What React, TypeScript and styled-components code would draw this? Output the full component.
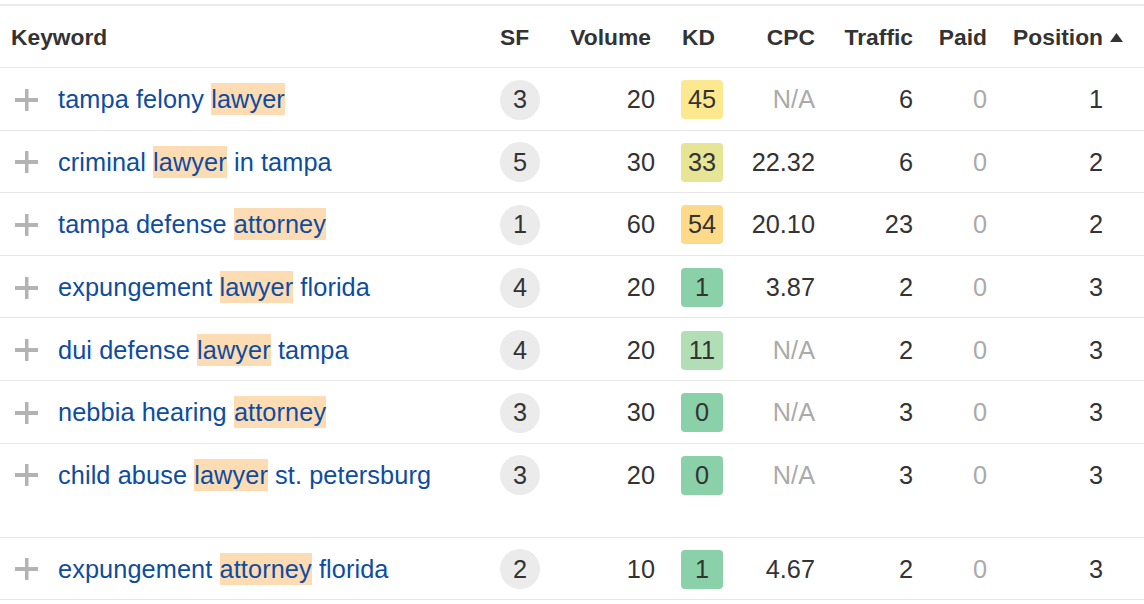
import React from "react";
import styled, { createGlobalStyle } from "styled-components";

const Global = createGlobalStyle`
  html, body { margin: 0; padding: 0; background: #ffffff; }
  body { padding-top: 4px; font-family: "Liberation Sans", Arial, Helvetica, sans-serif; color: #333333; }
`;

const COLS = "500px 60px 95px 85px 75px 98px 74px 1fr";

const Table = styled.div`
  width: 1144px;
  border-top: 2px solid #e9e9e9;
`;

const HeadRow = styled.div`
  display: grid;
  grid-template-columns: ${COLS};
  box-sizing: content-box;
  height: 60px;
  padding-top: 1px;
  align-items: center;
  border-bottom: 1px solid #e6e6e6;
`;

const HeadCell = styled.div<{ $align?: "left" | "right"; $pl?: number; $pr?: number }>`
  display: flex;
  align-items: center;
  justify-content: ${(p) => (p.$align === "right" ? "flex-end" : "flex-start")};
  padding-left: ${(p) => p.$pl ?? 0}px;
  padding-right: ${(p) => p.$pr ?? 0}px;
  font-size: 22.8px;
  font-weight: 700;
  color: #333333;
  white-space: nowrap;
  gap: 7px;
`;

const Row = styled.div<{ $tall?: boolean }>`
  display: grid;
  grid-template-columns: ${COLS};
  align-items: start;
  height: ${(p) => (p.$tall ? "93px" : "61.6px")};
  border-bottom: 1px solid #e6e6e6;
`;

const Cell = styled.div<{ $align?: "left" | "right"; $pl?: number; $pr?: number; $muted?: boolean }>`
  height: 61.6px;
  box-sizing: border-box;
  padding-top: 2px;
  display: flex;
  align-items: center;
  justify-content: ${(p) => (p.$align === "right" ? "flex-end" : "flex-start")};
  padding-left: ${(p) => p.$pl ?? 0}px;
  padding-right: ${(p) => p.$pr ?? 0}px;
  font-size: 25.3px;
  color: ${(p) => (p.$muted ? "#aaaaaa" : "#333333")};
  white-space: nowrap;
`;

const KeywordCell = styled(Cell)`
  padding-left: 15px;
  gap: 20px;
`;

const Keyword = styled.span`
  color: #0e4ca0;
  font-size: 25.3px;
  letter-spacing: 0.1px;
`;

const Mark = styled.span`
  background: #fddcb4;
  padding: 2px 0;
`;

const Circle = styled.span`
  width: 40px;
  height: 40px;
  border-radius: 50%;
  background: #ebebeb;
  display: flex;
  align-items: center;
  justify-content: center;
  font-size: 25.3px;
  color: #333333;
`;

const Badge = styled.span<{ $bg: string }>`
  width: 42px;
  height: 39px;
  border-radius: 4px;
  background: ${(p) => p.$bg};
  display: flex;
  align-items: center;
  justify-content: center;
  font-size: 25.3px;
  color: #333333;
`;

const PlusIcon = () => (
  <svg width="23" height="22" viewBox="0 0 23 22" style={{ flex: "none" }}>
    <rect x="0" y="9" width="23" height="4" fill="#b3b3b3" />
    <rect x="10" y="0" width="3.5" height="22" fill="#b3b3b3" />
  </svg>
);

const SortUp = () => (
  <svg width="13" height="9" viewBox="0 0 13 9">
    <polygon points="6.5,0 13,9 0,9" fill="#333333" />
  </svg>
);

type Data = {
  pre: string;
  mark: string;
  post: string;
  sf: number;
  vol: number;
  kd: number;
  kdBg: string;
  cpc: string;
  traffic: number;
  pos: number;
  tall?: boolean;
};

const rows: Data[] = [
  { pre: "tampa felony ", mark: "lawyer", post: "", sf: 3, vol: 20, kd: 45, kdBg: "#fce98f", cpc: "N/A", traffic: 6, pos: 1 },
  { pre: "criminal ", mark: "lawyer", post: " in tampa", sf: 5, vol: 30, kd: 33, kdBg: "#e6e596", cpc: "22.32", traffic: 6, pos: 2 },
  { pre: "tampa defense ", mark: "attorney", post: "", sf: 1, vol: 60, kd: 54, kdBg: "#fdda8a", cpc: "20.10", traffic: 23, pos: 2 },
  { pre: "expungement ", mark: "lawyer", post: " florida", sf: 4, vol: 20, kd: 1, kdBg: "#8ad0a8", cpc: "3.87", traffic: 2, pos: 3 },
  { pre: "dui defense ", mark: "lawyer", post: " tampa", sf: 4, vol: 20, kd: 11, kdBg: "#b2deb6", cpc: "N/A", traffic: 2, pos: 3 },
  { pre: "nebbia hearing ", mark: "attorney", post: "", sf: 3, vol: 30, kd: 0, kdBg: "#8ad0a8", cpc: "N/A", traffic: 3, pos: 3 },
  { pre: "child abuse ", mark: "lawyer", post: " st. petersburg", sf: 3, vol: 20, kd: 0, kdBg: "#8ad0a8", cpc: "N/A", traffic: 3, pos: 3, tall: true },
  { pre: "expungement ", mark: "attorney", post: " florida", sf: 2, vol: 10, kd: 1, kdBg: "#8ad0a8", cpc: "4.67", traffic: 2, pos: 3 },
];

export default function App() {
  return (
    <>
      <Global />
      <Table>
        <HeadRow>
          <HeadCell $pl={11}>Keyword</HeadCell>
          <HeadCell>SF</HeadCell>
          <HeadCell $align="right" $pr={4}>Volume</HeadCell>
          <HeadCell $pl={27}>KD</HeadCell>
          <HeadCell $align="right">CPC</HeadCell>
          <HeadCell $align="right">Traffic</HeadCell>
          <HeadCell $align="right">Paid</HeadCell>
          <HeadCell $align="right" $pr={21}>
            Position
            <SortUp />
          </HeadCell>
        </HeadRow>
        {rows.map((r, i) => (
          <Row key={i} $tall={r.tall}>
            <KeywordCell>
              <PlusIcon />
              <Keyword>
                {r.pre}
                <Mark>{r.mark}</Mark>
                {r.post}
              </Keyword>
            </KeywordCell>
            <Cell>
              <Circle>{r.sf}</Circle>
            </Cell>
            <Cell $align="right">{r.vol}</Cell>
            <Cell $pl={26}>
              <Badge $bg={r.kdBg}>{r.kd}</Badge>
            </Cell>
            <Cell $align="right" $muted={r.cpc === "N/A"}>{r.cpc}</Cell>
            <Cell $align="right">{r.traffic}</Cell>
            <Cell $align="right" $muted>0</Cell>
            <Cell $align="right" $pr={41}>{r.pos}</Cell>
          </Row>
        ))}
      </Table>
    </>
  );
}
